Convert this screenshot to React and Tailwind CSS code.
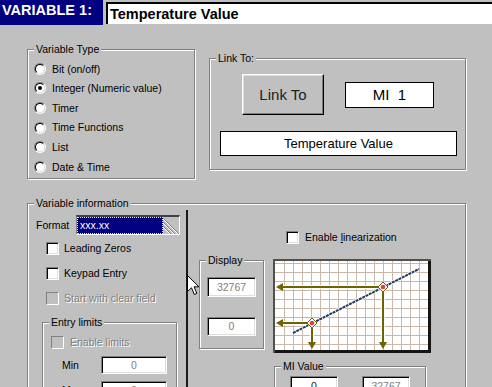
import React from "react";

// win95-ish bevels
const sunken = "border border-t-[#808080] border-l-[#808080] border-b-white border-r-white shadow-[inset_1px_1px_0_#000,inset_-1px_-1px_0_#dfdfdf]";
const etched = "border border-[#808080] shadow-[inset_1px_1px_0_#fff,1px_1px_0_#fff]";
const raised = "border border-t-white border-l-white border-b-black border-r-black shadow-[inset_-1px_-1px_0_#808080,inset_1px_1px_0_#dfdfdf]";
const dim = "text-[#808080] [text-shadow:1px_1px_0_#fff]";

function Group({ label, className = "", children }) {
  return (
    <div className={`relative ${etched} ${className}`}>
      <span className="absolute -top-[7px] left-[6px] bg-[#c0c0c0] px-[2px] leading-[13px]">{label}</span>
      {children}
    </div>
  );
}

function Radio({ checked, children }) {
  return (
    <div className="flex h-[19.6px] items-center gap-[6px]">
      <span className="flex h-[12px] w-[12px] rounded-full border border-t-[#808080] border-l-[#808080] border-r-white border-b-white">
        <span className="flex h-full w-full items-center justify-center rounded-full border border-t-black border-l-black border-r-[#dfdfdf] border-b-[#dfdfdf] bg-white">
          {checked && <span className="h-[4px] w-[4px] rounded-full bg-black" />}
        </span>
      </span>
      <span>{children}</span>
    </div>
  );
}

function Check({ disabled }) {
  if (disabled)
    return <span className="block h-[13px] w-[13px] border border-t-[#808080] border-l-[#808080] border-b-white border-r-white" />;
  return <span className={`block h-[13px] w-[13px] bg-white ${sunken}`} />;
}

function Field({ w, h, dimmed, children }) {
  return (
    <div className={`flex items-center justify-center bg-white ${sunken} ${w} ${h} ${dimmed ? "text-[#808080]" : "text-[#202020]"}`}>
      {children}
    </div>
  );
}

function Graph() {
  const olive = "#6f6200";
  const vx = [];
  for (let x = 11.5; x < 155; x += 9) vx.push(x);
  const hy = [];
  for (let y = 4.5; y < 91; y += 9) hy.push(y);
  const marker = (cx, cy) => (
    <g>
      <circle cx={cx} cy={cy} r="4.5" fill="#fff" />
      <path d={`M${cx - 5} ${cy} L${cx} ${cy - 5} L${cx + 5} ${cy} L${cx} ${cy + 5} Z`} fill="none" stroke={olive} strokeWidth="1" />
      <circle cx={cx} cy={cy} r="2.3" fill="#e8384a" />
    </g>
  );
  return (
    <svg width="158" height="94" viewBox="0 0 158 94" className="block">
      <rect x="0" y="0" width="158" height="94" fill="#151515" />
      <rect x="0" y="0" width="158" height="2" fill="#505050" />
      <rect x="0" y="0" width="2" height="94" fill="#505050" />
      <rect x="2" y="2" width="153" height="89" fill="#fff" />
      {vx.map((x) => <line key={"v" + x} x1={x} y1="2" x2={x} y2="91" stroke="#c8b9aa" strokeWidth="1" />)}
      {hy.map((y) => <line key={"h" + y} x1="2" y1={y} x2="155" y2={y} stroke="#c8b9aa" strokeWidth="1" />)}
      {/* halos */}
      <g stroke="#fff" strokeWidth="4">
        <line x1="8" y1="28" x2="106" y2="28" />
        <line x1="8" y1="64" x2="34" y2="64" />
        <line x1="110" y1="33" x2="110" y2="84" />
        <line x1="39" y1="69" x2="39" y2="84" />
      </g>
      <g stroke={olive} strokeWidth="2">
        <line x1="8" y1="28" x2="106" y2="28" />
        <line x1="8" y1="64" x2="34" y2="64" />
        <line x1="110" y1="33" x2="110" y2="84" />
        <line x1="39" y1="69" x2="39" y2="84" />
      </g>
      <g fill={olive}>
        <polygon points="3,28 10,24 10,32" />
        <polygon points="3,64 10,60 10,68" />
        <polygon points="110,90 106,83 114,83" />
        <polygon points="39,90 35,83 43,83" />
      </g>
      <line x1="20" y1="74" x2="146" y2="10" stroke="#fff" strokeWidth="3.5" />
      <line x1="20" y1="74" x2="146" y2="10" stroke="#22375a" strokeWidth="2" strokeDasharray="3 0.7" />
      {marker(39, 64)}
      {marker(110, 28)}
    </svg>
  );
}

export default function App() {
  return (
    <div className="relative h-[387px] w-[492px] overflow-hidden bg-[#c0c0c0] font-['Liberation_Sans',Arial,sans-serif] text-[10.5px] leading-none text-black">
      {/* title */}
      <div className="flex h-[26px] items-start">
        <div className="flex h-[25px] w-[103px] items-center bg-[#000080] pb-[4px] pl-[2px] text-[14.5px] font-bold text-white">VARIABLE 1:</div>
        <div className="ml-[3px] mt-[2px] flex h-[22px] flex-1 items-center border-t-2 border-l-2 border-t-black border-l-black bg-white pl-[2px] text-[14.5px] font-bold">
          Temperature Value
        </div>
      </div>

      <div className="mt-[23px] flex items-start pl-[27px]">
        <Group label="Variable Type" className="h-[130px] w-[168px] pl-[6px] pt-[9px]">
          <Radio>Bit (on/off)</Radio>
          <Radio checked>Integer (Numeric value)</Radio>
          <Radio>Timer</Radio>
          <Radio>Time Functions</Radio>
          <Radio>List</Radio>
          <Radio>Date &amp; Time</Radio>
        </Group>

        <Group label="Link To:" className="ml-[14px] mt-[9px] h-[112px] w-[257px]">
          <div className="flex items-center gap-[21px] pl-[32px] pt-[15px]">
            <button className={`flex h-[41px] w-[82px] items-center justify-center bg-[#c0c0c0] text-[15px] text-[#202020] ${raised}`}>Link To</button>
            <div className="flex h-[26px] w-[89px] items-center justify-center whitespace-pre border border-black bg-white text-[15px]">MI  1</div>
          </div>
          <div className="ml-[10px] mt-[16px] flex h-[25px] w-[237px] items-center justify-center border border-black bg-white text-[13px]">
            Temperature Value
          </div>
        </Group>
      </div>

      <Group label="Variable information" className="ml-[27px] mt-[24px] flex h-[200px] w-[439px] items-start">
        {/* left column */}
        <div className="w-[158px] shrink-0">
          <div className="mt-[11px] flex h-[20px] items-center pl-[8px]">
            <span className="w-[40px]">Format</span>
            <div className="flex h-[20px] w-[104px] border-t-2 border-l border-r border-b border-t-[#404040] border-l-[#808080] border-r-white border-b-white bg-[#c0c0c0]">
              <div className="flex h-[17px] w-[86px] items-center bg-[#000080] pl-[3px] text-white outline-1 -outline-offset-1 outline-dotted outline-[#ffff00]">
                xxx.xx
              </div>
              <svg width="16" height="17" viewBox="0 0 16 17" className="block">
                <g strokeWidth="1">
                  <line x1="0" y1="1" x2="16" y2="17" stroke="#808080" />
                  <line x1="0" y1="2" x2="15" y2="17" stroke="#fff" />
                  <line x1="0" y1="5" x2="12" y2="17" stroke="#808080" />
                  <line x1="0" y1="6" x2="11" y2="17" stroke="#fff" />
                  <line x1="0" y1="9" x2="8" y2="17" stroke="#808080" />
                  <line x1="0" y1="10" x2="7" y2="17" stroke="#fff" />
                </g>
              </svg>
            </div>
          </div>
          <div className="mt-[1px] flex h-[25px] items-center gap-[5px] pl-[18px]">
            <Check /> <span>Leading Zeros</span>
          </div>
          <div className="flex h-[25px] items-center gap-[5px] pl-[18px]">
            <Check /> <span>Keypad Entry</span>
          </div>
          <div className="flex h-[25px] items-center gap-[5px] pl-[18px]">
            <Check disabled /> <span className={dim}>Start with clear field</span>
          </div>

          <Group label="Entry limits" className="ml-[14px] mt-[11px] h-[80px] w-[135px]">
            <div className="mt-[12px] flex h-[14px] items-center gap-[6px] pl-[8px]">
              <Check disabled /> <span className={dim}>Enable limits</span>
            </div>
            <div className="mt-[7px] flex items-center pl-[19px]">
              <span className="w-[39px]">Min</span>
              <Field w="w-[66px]" h="h-[18px]" dimmed>0</Field>
            </div>
            <div className="mt-[7px] flex items-center pl-[19px]">
              <span className="w-[39px]">Max</span>
              <Field w="w-[66px]" h="h-[18px]" dimmed>0</Field>
            </div>
          </Group>
        </div>

        <div className="mt-[6px] h-[190px] w-[2px] shrink-0 bg-[#1a1a1a]" />

        <Group label="Display" className="ml-[11px] mt-[56px] h-[89px] w-[65px] shrink-0 pl-[7px] pt-[16px]">
          <Field w="w-[49px]" h="h-[20px]" dimmed>32767</Field>
          <div className="mt-[20px]">
            <Field w="w-[49px]" h="h-[19px]" dimmed>0</Field>
          </div>
        </Group>

        <div className="ml-[9px] shrink-0">
          <div className="ml-[13px] mt-[26px] flex h-[14px] items-center gap-[6px]">
            <Check /> <span>Enable <u>l</u>inearization</span>
          </div>
          <div className="mt-[15px]">
            <Graph />
          </div>
          <Group label="MI Value" className="ml-[1px] mt-[13px] h-[40px] w-[152px]">
            <div className="flex gap-[24px] pl-[15px] pt-[9px]">
              <Field w="w-[48px]" h="h-[20px]">0</Field>
              <Field w="w-[48px]" h="h-[20px]" dimmed>32767</Field>
            </div>
          </Group>
        </div>
      </Group>

      {/* mouse pointer */}
      <svg width="13" height="21" viewBox="0 0 13 21" className="absolute left-[187px] top-[275px]">
        <path d="M0.5 0.5 L0.5 16.5 L4.5 12.8 L7.3 19.5 L9.8 18.4 L7.1 11.8 L12 11.8 Z" fill="#fff" stroke="#000" strokeWidth="1" strokeLinejoin="miter" />
      </svg>
    </div>
  );
}
